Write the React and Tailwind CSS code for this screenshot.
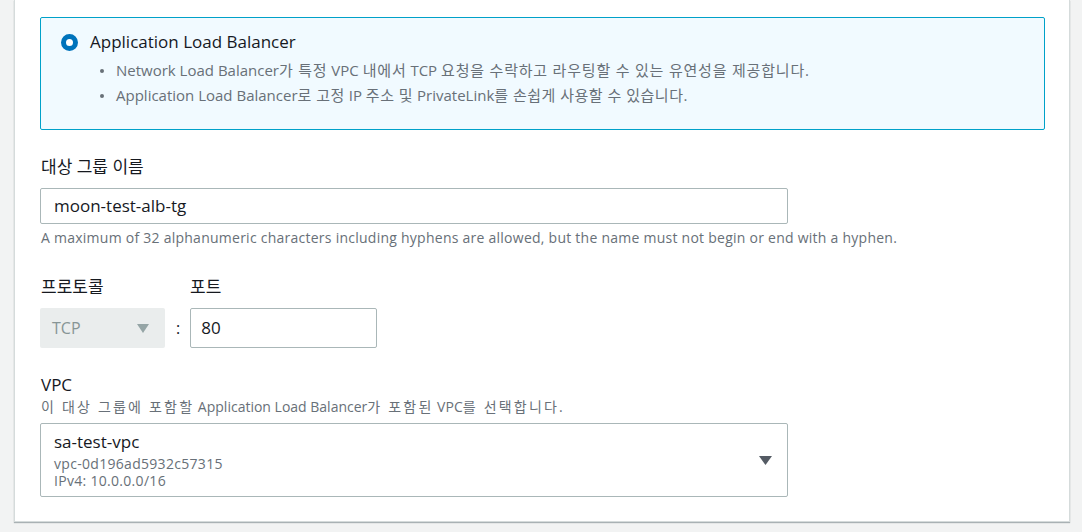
// target-group/CreateTargetGroup.jsx
const font = { fontFamily: '"Open Sans", "Noto Sans CJK KR", sans-serif' };

const Bullet = ({ children }) => (
    <li className="flex h-[25px] items-center">
        <span className="ml-[59px] mr-[12px] h-[4px] w-[4px] rounded-full bg-[#687078]" />
        <span>{children}</span>
    </li>
);

const Ko = ({ children, className = 'tracking-[0.8px]' }) => <span className={className}>{children}</span>;

const App = () => {
    return (
        <div className="h-[532px] w-[1082px] bg-[#f2f3f3] pl-[14px] pr-[12px] pb-[10px]" style={font}>
            <div className="h-full border-x border-b border-[#d5dbdb] bg-white pl-[25px] pr-[24px] pt-[17px] shadow-[0_1px_1px_rgba(0,28,36,0.3)]">
                {/* Load balancer type */}
                <div className="rounded-[2px] border border-[#00a1c9] bg-[#f1faff] pl-[20px] pt-[12px] pb-[21px]">
                    <div className="flex h-[24px] items-center">
                        <span className="h-[17px] w-[17px] rounded-full border-[5px] border-[#0073bb] bg-white" />
                        <span className="ml-[12px] text-[17px] text-[#16191f]">Application Load Balancer</span>
                    </div>
                    <ul className="mt-[4px] ml-[-20px] text-[15px] text-[#687078]">
                        <Bullet>
                            Network Load Balancer<Ko>가 특정</Ko> VPC <Ko>내에서</Ko> TCP <Ko>요청을 수락하고 라우팅할 수 있는 유연성을 제공합니다</Ko>.
                        </Bullet>
                        <Bullet>
                            Application Load Balancer<Ko className="tracking-[0.5px]">로 고정</Ko> IP <Ko className="tracking-[0.5px]">주소 및</Ko> PrivateLink<Ko className="tracking-[0.5px]">를 손쉽게 사용할 수 있습니다</Ko>.
                        </Bullet>
                    </ul>
                </div>

                {/* Target group name */}
                <div className="mt-[25px] h-[24px] pl-[1px] text-[17px] leading-[24px] text-[#16191f]">대상 그룹 이름</div>
                <div className="mt-[9px] flex h-[36px] w-[748px] items-center rounded-[2px] border border-[#aab7b8] pl-[13px] text-[17px] text-[#16191f]">
                    moon-test-alb-tg
                </div>
                <p className="mt-[5px] h-[18px] pl-[1px] text-[14px] leading-[18px] tracking-[0.25px] text-[#687078]">
                    A maximum of 32 alphanumeric characters including hyphens are allowed, but the name must not begin or end with a hyphen.
                </p>

                {/* Protocol / port */}
                <div className="mt-[28px] flex h-[24px] text-[17px] leading-[24px] text-[#16191f]">
                    <span className="w-[150px] pl-[1px]">프로토콜</span>
                    <span>포트</span>
                </div>
                <div className="mt-[9px] flex items-center">
                    <div className="flex h-[40px] w-[125px] items-center justify-between rounded-[2px] bg-[#eaeded] pl-[12px] pr-[16px] text-[16px] text-[#879596]">
                        <span>TCP</span>
                        <svg width="12" height="10" viewBox="0 0 12 10"><path d="M0 1h12L6 10z" fill="#95a5a6" /></svg>
                    </div>
                    <span className="ml-[11px] mr-[10px] text-[16px] text-[#16191f]">:</span>
                    <div className="flex h-[40px] w-[187px] items-center rounded-[2px] border border-[#aab7b8] pl-[10px] text-[17px] text-[#16191f]">
                        80
                    </div>
                </div>

                {/* VPC */}
                <div className="mt-[25px] h-[24px] pl-[1px] text-[17px] leading-[24px] text-[#16191f]">VPC</div>
                <p className="mt-[1px] h-[18px] pl-[1px] text-[14px] leading-[18px] text-[#687078]">
                    <Ko className="tracking-[2.2px]">이 대상 그룹에 포함할</Ko> Application Load Balancer<Ko className="tracking-[2.2px]">가 포함된</Ko> VPC<Ko className="tracking-[2.2px]">를 선택합니다</Ko>.
                </p>
                <div className="mt-[7px] flex h-[74px] w-[748px] items-center justify-between rounded-[2px] border border-[#aab7b8] pl-[13px] pr-[15px]">
                    <div className="flex flex-col">
                        <span className="text-[17px] leading-[22px] text-[#16191f]">sa-test-vpc</span>
                        <span className="mt-[2px] text-[14px] leading-[17px] tracking-[0.3px] text-[#687078]">vpc-0d196ad5932c57315</span>
                        <span className="text-[14px] leading-[17px] tracking-[0.3px] text-[#687078]">IPv4: 10.0.0.0/16</span>
                    </div>
                    <svg width="13" height="10" viewBox="0 0 13 10"><path d="M0 1h13L6.5 10z" fill="#545b64" /></svg>
                </div>
            </div>
        </div>
    );
};

export default App;
